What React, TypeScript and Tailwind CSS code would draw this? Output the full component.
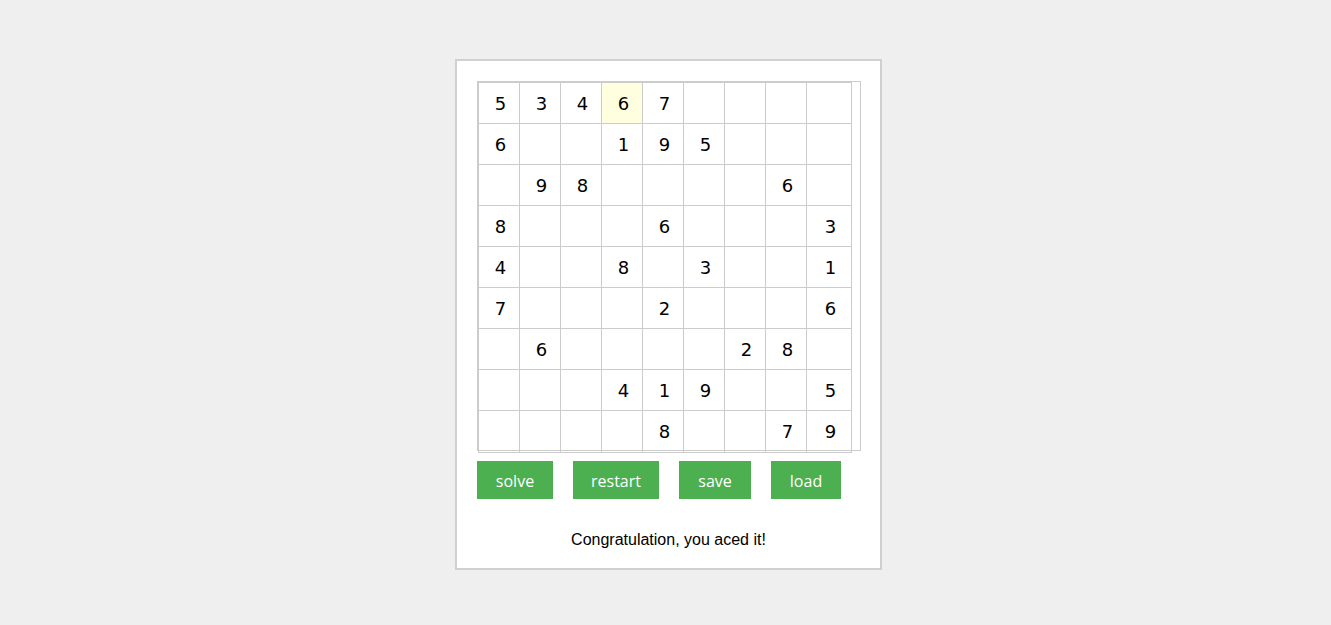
const board: (number | null)[][] = [
  [5, 3, 4, 6, 7, null, null, null, null],
  [6, null, null, 1, 9, 5, null, null, null],
  [null, 9, 8, null, null, null, null, 6, null],
  [8, null, null, null, 6, null, null, null, 3],
  [4, null, null, 8, null, 3, null, null, 1],
  [7, null, null, null, 2, null, null, null, 6],
  [null, 6, null, null, null, null, 2, 8, null],
  [null, null, null, 4, 1, 9, null, null, 5],
  [null, null, null, null, 8, null, null, 7, 9],
];

const buttons = [
  { label: 'solve', w: 'w-[76px]' },
  { label: 'restart', w: 'w-[86px]' },
  { label: 'save', w: 'w-[72px]' },
  { label: 'load', w: 'w-[70px]' },
];

export default function App() {
  return (
    <div className="min-h-[625px] w-full bg-[#efefef] pt-[59px] flex justify-center pl-[6px]">
      <div className="w-[427px] h-[511px] bg-white border-2 border-[#d0d0d0] px-[20px] pt-[20px] flex flex-col">
        <div className="w-[384px] h-[370px] border border-[#cccccc]">
          <div className="border-l border-t border-[#cccccc] w-[374px]">
            {board.map((row, r) => (
              <div key={r} className="flex">
                {row.map((v, c) => (
                  <div
                    key={c}
                    className={`${r === 8 ? 'h-[42px]' : 'h-[41px]'} ${c === 8 ? 'w-[45px]' : 'w-[41px]'} border-r border-b border-[#cccccc] flex items-center justify-center pl-[3px] text-[18px] text-black font-['Verdana','DejaVu_Sans',sans-serif] ${r === 0 && c === 3 ? 'bg-[#ffffe0]' : ''}`}
                  >
                    {v ?? ''}
                  </div>
                ))}
              </div>
            ))}
          </div>
        </div>

        <div className="flex gap-5 mt-[10px]">
          {buttons.map((b) => (
            <button
              key={b.label}
              className={`${b.w} h-[38px] bg-[#4caf50] text-white text-[16px] pt-[1px] font-['Open_Sans',sans-serif]`}
            >
              {b.label}
            </button>
          ))}
        </div>

        <p className="mt-[29px] text-center text-[16px] text-black font-['Liberation_Sans',Arial,sans-serif]">
          Congratulation, you aced it!
        </p>
      </div>
    </div>
  );
}
